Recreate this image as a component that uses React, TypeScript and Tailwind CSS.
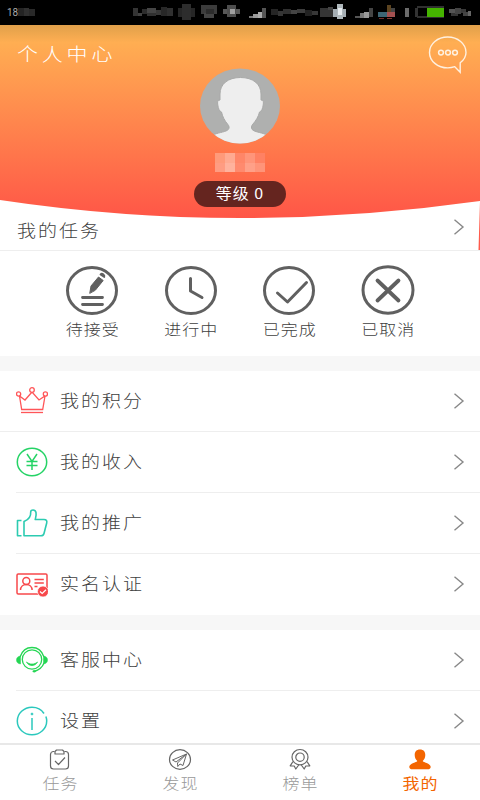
import type { ReactNode } from 'react';

interface MenuItem {
  label: string;
  icon: ReactNode;
}

// x, y, width, height, fill
type Block = [number, number, number, number, string];

const statusBlocks: Block[] = [
  [18, 8, 6, 8, '#242424'],
  [24, 8, 5, 8, '#303030'],
  [29, 9, 6, 7, '#292929'],
  [133, 8, 5, 8, '#343434'],
  [138, 13, 4, 3, '#414141'],
  [142, 9, 5, 5, '#2c2c2c'],
  [147, 8, 9, 5, '#454545'],
  [147, 13, 9, 3, '#303030'],
  [156, 10, 5, 5, '#373737'],
  [161, 7, 6, 9, '#282828'],
  [167, 8, 6, 8, '#303030'],
  [178, 8, 17, 9, '#262626'],
  [182, 4, 9, 16, '#2d2d2d'],
  [201, 5, 16, 9, '#3c3c3c'],
  [204, 13, 10, 5, '#444444'],
  [206, 9, 8, 5, '#2c2c2c'],
  [223, 9, 17, 5, '#585858'],
  [227, 5, 9, 12, '#4e4e4e'],
  [230, 9, 5, 5, '#a0a0a0'],
  [249, 16, 4, 2, '#777'],
  [253, 14, 5, 4, '#999'],
  [258, 12, 4, 6, '#aaa'],
  [262, 8, 4, 10, '#555'],
  [271, 9, 7, 6, '#252525'],
  [278, 11, 5, 5, '#353535'],
  [283, 9, 8, 5, '#303030'],
  [291, 10, 6, 4, '#444'],
  [297, 9, 8, 4, '#3d3d3d'],
  [305, 10, 7, 6, '#222'],
  [312, 11, 6, 4, '#373737'],
  [320, 8, 13, 9, '#353535'],
  [328, 7, 5, 3, '#444'],
  [333, 9, 13, 8, '#a4adb3'],
  [337, 4, 6, 15, '#aeb7bb'],
  [338, 8, 4, 7, '#e5eaed'],
  [355, 16, 5, 2, '#555'],
  [360, 13, 4, 5, '#777'],
  [364, 12, 5, 6, '#999'],
  [369, 8, 4, 9, '#444'],
  [378, 12, 9, 5, '#3d6675'],
  [387, 12, 8, 5, '#a35050'],
  [387, 5, 4, 7, '#5c4420'],
  [391, 8, 4, 4, '#444'],
  [379, 18, 5, 1, '#702c28'],
  [387, 18, 5, 1, '#823630'],
  [405, 8, 4, 9, '#6b6b6b'],
  [415, 8, 3, 9, '#333'],
  [417, 6, 27, 2, '#303030'],
  [417, 16, 27, 2, '#303030'],
  [427, 8, 17, 9, '#45b300'],
  [449, 9, 6, 4, '#555'],
  [451, 13, 7, 3, '#333'],
  [455, 8, 6, 6, '#444'],
  [461, 9, 5, 4, '#393939'],
  [463, 12, 5, 4, '#444'],
  [468, 11, 3, 5, '#666'],
];

const nameBlocks = [
  'bg-[#ff9a7a]', 'bg-[#ffaa91]', 'bg-[#ff8668]', 'bg-[#ff957a]', 'bg-[#ff8163]',
  'bg-[#ff9c82]', 'bg-[#ffb29d]', 'bg-[#ff8a6e]', 'bg-[#ffa088]', 'bg-[#ff9479]',
];

function StatusBar() {
  return (
    <div className="relative h-[25px] shrink-0 bg-black">
      <svg className="absolute inset-0" width="480" height="25" shapeRendering="crispEdges">
        {statusBlocks.map(([x, y, w, h, fill], i) => (
          <rect key={i} x={x} y={y} width={w} height={h} fill={fill} />
        ))}
      </svg>
      <span className="absolute left-[7px] top-[6px] font-['Roboto',sans-serif] text-[10px] leading-[13px] text-[#aaa]">18</span>
    </div>
  );
}

function Chevron() {
  return (
    <svg className="-mt-0.5" width="12" height="18" viewBox="0 0 12 18" fill="none" stroke="#888" strokeWidth="1.4">
      <path d="M1.5 1.8 10 9l-8.5 7.2" />
    </svg>
  );
}

function Header() {
  return (
    <header className="relative flex h-[193px] shrink-0 flex-col items-center">
      <svg className="absolute left-0 top-0" width="480" height="225" viewBox="0 0 480 225">
        <defs>
          <linearGradient id="sunset" x1="0" y1="0" x2="0" y2="193" gradientUnits="userSpaceOnUse">
            <stop offset="0" stopColor="#e0a04b" />
            <stop offset=".03" stopColor="#eaa54d" />
            <stop offset=".09" stopColor="#ffae52" />
            <stop offset="1" stopColor="#ff5647" />
          </linearGradient>
        </defs>
        <path d="M0 0H480V176Q360 193 240 193T0 175Z" fill="url(#sunset)" />
        <path d="M480 176l-1.500 49H480Z" fill="#ff5b4c" />
      </svg>
      <div className="relative flex h-[43px] w-full justify-between pl-[17px] pr-3">
        <h1 className="mt-[16px] scale-y-[.88] text-[21px] leading-6 tracking-[3.8px] font-light text-white">个人中心</h1>
        <svg className="mt-[10px]" width="40" height="40" viewBox="0 0 40 40" fill="none" stroke="#fff0df" strokeWidth="1.400">
          <path d="M32.200 37.200v-9.400C35.700 25 38 21.500 38 17.400 38 8.800 29.800 2 19.700 2S1.500 8.800 1.500 17.400s8.200 15.500 18.200 15.500c2.500 0 4.900-.4 7.100-1.200Z" />
          <circle cx="13" cy="17.600" r="2.400" strokeWidth="1.500" />
          <circle cx="20" cy="17.600" r="2.400" strokeWidth="1.500" />
          <circle cx="27" cy="17.600" r="2.400" strokeWidth="1.500" />
        </svg>
      </div>
      <svg className="relative" width="80" height="76" viewBox="0 0 80 76">
        <defs>
          <clipPath id="avatar">
            <ellipse cx="40" cy="38" rx="40" ry="37.500" />
          </clipPath>
        </defs>
        <g clipPath="url(#avatar)">
          <rect width="80" height="76" fill="#afb0af" />
          <path
            d="M40.500 9.500C53 9.500 61 16 61 26v6c2.500 0 2.700 2 2.200 5-.5 3.500-1.700 6.500-3.700 7-1 4.500-3.500 8.500-6.500 12-1.800 2-2 4-.8 5.500 2.300 2.500 8 2.700 13.800 5V78H14V66.500c5.800-2.300 12-2.500 14.300-5 1.300-1.500 1-3.500-.8-5.500-3-3.500-5-7.500-6-12-2-.5-3.200-3.500-3.700-7-.5-3-.3-5 2.200-5v-6C20 16 28 9.500 40.500 9.500Z"
            fill="#eee"
            stroke="#a8a9a8"
            strokeWidth="1"
          />
        </g>
      </svg>
      <div className="relative mt-[9px] grid h-[19px] w-[51px] shrink-0 grid-cols-5">
        {nameBlocks.map((color, i) => (
          <span key={i} className={color} />
        ))}
      </div>
      <div className="relative mt-[9px] h-[26px] w-[92px] shrink-0 rounded-full bg-[#65251f] text-center text-white">
        <span className="block scale-y-90 text-[16px] leading-[25px] tracking-[1px]">等级 0</span>
      </div>
    </header>
  );
}

const tasks: MenuItem[] = [
  {
    label: '待接受',
    icon: (
      <>
        <ellipse cx="26" cy="24.500" rx="24.500" ry="23" />
        <path d="M16.500 31.500h20M16.500 38.500h20" strokeWidth="2.800" />
        <path d="m23.800 27 1.200-7 7.500-9 4.700 3.500-7.700 9.500Z" fill="#606060" strokeWidth="1" />
        <path d="M34.500 8.500c1.500-2 4.500.5 3.800 2.500Z" fill="#606060" strokeWidth="1.800" />
      </>
    ),
  },
  {
    label: '进行中',
    icon: (
      <>
        <ellipse cx="26" cy="24.500" rx="24.500" ry="23" />
        <path d="M25.500 12.500V25l11.500 6.500" />
      </>
    ),
  },
  {
    label: '已完成',
    icon: (
      <>
        <ellipse cx="26" cy="24.500" rx="24.500" ry="23" />
        <path d="m14.500 27 10 9L43.500 16.500" />
      </>
    ),
  },
  {
    label: '已取消',
    icon: (
      <>
        <ellipse cx="26" cy="24" rx="25" ry="23.200" />
        <path d="m15.500 14.500 21 20M36.500 14.500l-21 20" strokeWidth="3.800" />
      </>
    ),
  },
];

const accountItems: MenuItem[] = [
  {
    label: '我的积分',
    icon: (
      <g stroke="#ff5558" strokeWidth="1.300">
        <path d="m3.500 11 2.200 13.500h21L29 11l-6 4-7-8-7 8Z" />
        <path d="M5 27.500h22" />
        <circle cx="2.600" cy="9" r="2.100" fill="#fff" />
        <circle cx="16" cy="5" r="2.300" fill="#fff" />
        <circle cx="29.400" cy="9" r="2.100" fill="#fff" />
      </g>
    ),
  },
  {
    label: '我的收入',
    icon: (
      <g stroke="#25d366" strokeWidth="1.500">
        <ellipse cx="16" cy="16" rx="14.700" ry="13.700" />
        <path d="m11 8 5 7.500L21 8M16 15.500V24M10.500 15.500h11M10.500 19.500h11" />
      </g>
    ),
  },
  {
    label: '我的推广',
    icon: (
      <g stroke="#2ccbb1" strokeWidth="1.600" strokeLinejoin="round">
        <path d="M5.500 13.500H1.500v15.300h4" />
        <path d="M8 28.800V14.500c5-2 7-6 6.700-9.500 0-2.500 4.500-3 5.300.5.600 3-.3 5-.8 7H28c2.500 0 3.200 1.500 2.700 3.500L28 26.500c-.5 1.800-1.500 2.300-3 2.300Z" />
      </g>
    ),
  },
  {
    label: '实名认证',
    icon: (
      <g stroke="#f7484b" strokeWidth="1.500">
        <rect x="1" y="6" width="30" height="20" rx="1.200" />
        <circle cx="10.300" cy="13" r="3.500" />
        <path d="M4.500 22c0-3.500 2.700-5.500 5.800-5.500s5.800 2 5.800 5.500M18.500 11.500h9.300M18.500 15h9.300M18.500 18.500h3" />
        <circle cx="27" cy="23.500" r="5.500" fill="#f7484b" stroke="#fff" strokeWidth=".7" />
        <path d="m24 23.500 2.200 2 3.800-3.700" stroke="#fff" strokeWidth="1.200" />
      </g>
    ),
  },
];

const supportItems: MenuItem[] = [
  {
    label: '客服中心',
    icon: (
      <g stroke="#25d654" strokeWidth="1.300">
        <path d="M4 13C6 7 10.500 3.500 16 3.500S26 7 28 13M28 19c-1.500 4-4.500 7-10 8.500" />
        <circle cx="16" cy="15.500" r="9.700" />
        <path d="M4.500 12v8C1.500 19.500.5 18 .5 16s1-3.500 4-4ZM27.500 12v8c3-.5 4-2 4-4s-1-3.500-4-4Z" fill="#25d654" strokeWidth=".5" />
        <path d="M10.500 18c3 2.800 8 2.800 11 0-2.500 4.700-8.500 4.700-11 0Z" fill="#25d654" strokeWidth=".8" />
        <ellipse cx="18.200" cy="27.300" rx="1.600" ry="1" fill="#25d654" strokeWidth=".3" />
      </g>
    ),
  },
  {
    label: '设置',
    icon: (
      <g stroke="#2bc8bd" strokeWidth="1.500">
        <path d="M28 8.500C25.500 4.500 21 2.200 16 2.200c-8.100 0-14.700 6.200-14.700 13.800S7.900 29.800 16 29.800 30.700 23.600 30.700 16c0-1.700-.3-3.100-.8-4.500" />
        <path d="M16 13v12" />
        <circle cx="16" cy="9" r="1.100" fill="#2bc8bd" strokeWidth=".5" />
      </g>
    ),
  },
];

function MenuRow({ item, line }: { item: MenuItem; line?: string }) {
  return (
    <div className="relative flex h-[61px] shrink-0 items-center pl-4 pr-[15px]">
      <svg className="-mt-px" width="32" height="32" viewBox="0 0 32 32" fill="none">
        {item.icon}
      </svg>
      <span className="-mt-1 ml-3 flex-1 scale-y-[.88] text-[19px] leading-7 tracking-[2px] font-light text-[#404040]">{item.label}</span>
      <Chevron />
      {line && <span className={`absolute bottom-0 right-0 h-px bg-[#eee] ${line}`} />}
    </div>
  );
}

const tabs: (MenuItem & { active?: boolean })[] = [
  {
    label: '任务',
    icon: (
      <>
        <path d="M6.500 3.500H5.500a3 3 0 0 0-3 3V18a3 3 0 0 0 3 3h12a3 3 0 0 0 3-3V6.500a3 3 0 0 0-3-3h-1" />
        <path d="M7 6h9V3.500L14.500 2h-6L7 3.500ZM7 13l3.500 3.500 6.500-7" />
      </>
    ),
  },
  {
    label: '发现',
    icon: (
      <>
        <ellipse cx="12" cy="11.500" rx="10.500" ry="9.800" />
        <path d="M18.500 6 4.500 12l3.500 2L18.500 6 9.500 15l.3 3.500 2.200-2.500 3 1.500Z" strokeWidth="1" />
      </>
    ),
  },
  {
    label: '榜单',
    icon: (
      <>
        <ellipse cx="12" cy="9.200" rx="8" ry="7.700" />
        <circle cx="12" cy="9.200" r="4.200" />
        <path d="m5 13.500-2.800 4.300 4 .2 1.600 3 2.900-4M19 13.500l2.800 4.300-4 .2-1.600 3-2.900-4" />
      </>
    ),
  },
  {
    label: '我的',
    active: true,
    icon: (
      <path
        d="M12 1.500c3.500 0 5.300 2.200 5.300 5.500 0 2.500-1 4.500-2.600 6 .4 1.500 8 2.200 8 6 0 1.700-1.500 2.300-3 2.300H4.300c-1.500 0-3-.6-3-2.300 0-3.800 7.600-4.500 8-6C7.700 11.500 6.700 9.500 6.700 7c0-3.300 1.800-5.500 5.300-5.500Z"
        fill="#f36500"
        stroke="none"
      />
    ),
  },
];

export default function App() {
  return (
    <div className="flex h-[800px] w-[480px] flex-col overflow-hidden bg-white font-['Noto_Sans_CJK_SC',sans-serif]">
      <StatusBar />
      <Header />
      <section className="flex h-[33px] shrink-0 items-start justify-between border-b border-[#eee] pl-[17px] pr-[15px] pt-px">
        <h2 className="scale-y-[.88] text-[19px] leading-[22px] tracking-[2px] font-light text-[#404040]">我的任务</h2>
        <div className="pt-px">
          <Chevron />
        </div>
      </section>
      <section className="grid h-[105px] shrink-0 grid-cols-4 px-[43px] pt-[15px]">
        {tasks.map((task) => (
          <div key={task.label} className="flex flex-col items-center">
            <svg className="overflow-visible" width="52" height="50" viewBox="0 0 52 50" fill="none" stroke="#606060" strokeWidth="3" strokeLinecap="round" strokeLinejoin="round">
              {task.icon}
            </svg>
            <span className="mt-px pl-px scale-y-[.86] text-[17px] leading-6 tracking-[1px] font-light text-[#404040]">{task.label}</span>
          </div>
        ))}
      </section>
      <div className="h-[15px] shrink-0 bg-[#f7f7f7]" />
      <main className="flex min-h-0 flex-1 flex-col overflow-hidden">
        {accountItems.map((item, i) => (
          <MenuRow key={item.label} item={item} line={i === 0 ? 'left-0' : i < 3 ? 'left-4' : undefined} />
        ))}
        <div className="h-[15px] shrink-0 bg-[#f7f7f7]" />
        {supportItems.map((item, i) => (
          <MenuRow key={item.label} item={item} line={i === 0 ? 'left-4' : undefined} />
        ))}
      </main>
      <nav className="grid h-[57px] shrink-0 grid-cols-4 border-t-2 border-[#e8e8e8] bg-white">
        {tabs.map((tab) => (
          <div key={tab.label} className="flex flex-col items-center pt-[3px]">
            <svg width="24" height="23" viewBox="0 0 24 23" fill="none" stroke="#666" strokeWidth="1.200" strokeLinejoin="round">
              {tab.icon}
            </svg>
            <span className={`pl-px scale-y-[.86] text-[17px] leading-6 tracking-[1px] ${tab.active ? 'text-[#f36500]' : 'font-light text-[#999]'}`}>
              {tab.label}
            </span>
          </div>
        ))}
      </nav>
    </div>
  );
}
